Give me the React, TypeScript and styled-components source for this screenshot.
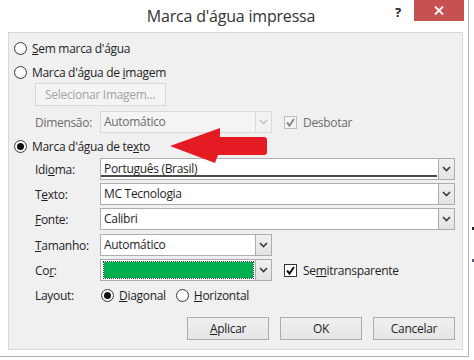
import React from 'react';
import styled, { createGlobalStyle } from 'styled-components';

const GlobalStyle = createGlobalStyle`
  body {
    margin: 0;
    background: #fff;
    font-family: 'Open Sans', 'Noto Sans', sans-serif;
    font-size: 12px;
    letter-spacing: -0.3px;
    color: #1e1e1e;
  }
`;

const Chevron: React.FC<{ color?: string }> = ({ color = '#3a3a3a' }) => (
  <svg width="9" height="6" viewBox="0 0 9 6">
    <polyline points="1,1 4.5,4.5 8,1" fill="none" stroke={color} strokeWidth="1.6" />
  </svg>
);

const Check: React.FC<{ color: string }> = ({ color }) => (
  <svg width="11" height="11" viewBox="0 0 11 11">
    <polyline points="2,5.5 4.5,8.5 9,2" fill="none" stroke={color} strokeWidth="2" />
  </svg>
);

const App: React.FC = () => {
  return (
    <Page>
      <GlobalStyle />
      <Window>
        <TitleBar>
          <Title>Marca d'água impressa</Title>
          <Help>?</Help>
          <Close>
            <svg width="10" height="9" viewBox="0 0 10 9">
              <path d="M1 0.5 L9 8.5 M9 0.5 L1 8.5" stroke="#fff" strokeWidth="1.8" />
            </svg>
          </Close>
        </TitleBar>
        <Panel>
          <RadioRow>
            <Radio />
            <span><U>S</U>em marca d'água</span>
          </RadioRow>
          <RadioRow $mt={4}>
            <Radio />
            <span>Marca d'água de <U>i</U>magem</span>
          </RadioRow>
          <DisabledButton $mt={1}>Selecionar Imagem...</DisabledButton>
          <FieldRow $mt={5}>
            <Label $disabled>Dimensão:</Label>
            <SelectBox $w={172} $disabled>
              <Value $disabled>Automático</Value>
              <ArrowBox $disabled><Chevron color="#c4c4c4" /></ArrowBox>
            </SelectBox>
            <CheckItem $disabled>
              <CheckBox $disabled><Check color="#8a8a8a" /></CheckBox>
              Desbotar
            </CheckItem>
          </FieldRow>
          <RadioRow $mt={3}>
            <Radio $on />
            <span>Marca d'água de te<U>x</U>to</span>
          </RadioRow>
          <FieldRow $mt={2}>
            <Label>Idi<U>o</U>ma:</Label>
            <SelectBox $w={355}>
              <Value $lined>Português (Brasil)</Value>
              <ArrowBox><Chevron /></ArrowBox>
            </SelectBox>
          </FieldRow>
          <FieldRow $mt={3}>
            <Label>T<U>e</U>xto:</Label>
            <SelectBox $w={355}>
              <Value>MC Tecnologia</Value>
              <ArrowBox><Chevron /></ArrowBox>
            </SelectBox>
          </FieldRow>
          <FieldRow $mt={3}>
            <Label><U>F</U>onte:</Label>
            <SelectBox $w={355}>
              <Value>Calibri</Value>
              <ArrowBox><Chevron /></ArrowBox>
            </SelectBox>
          </FieldRow>
          <FieldRow $mt={4}>
            <Label><U>T</U>amanho:</Label>
            <SelectBox $w={172}>
              <Value>Automático</Value>
              <ArrowBox><Chevron /></ArrowBox>
            </SelectBox>
          </FieldRow>
          <FieldRow $mt={3}>
            <Label>Co<U>r</U>:</Label>
            <SelectBox $w={172}>
              <Swatch />
              <ArrowBox><Chevron /></ArrowBox>
            </SelectBox>
            <CheckItem>
              <CheckBox><Check color="#111" /></CheckBox>
              <span>Se<U>m</U>itransparente</span>
            </CheckItem>
          </FieldRow>
          <FieldRow $mt={3}>
            <Label>Layout:</Label>
            <Options>
              <RadioItem>
                <Radio $on />
                <span><U>D</U>iagonal</span>
              </RadioItem>
              <RadioItem>
                <Radio />
                <span><U>H</U>orizontal</span>
              </RadioItem>
            </Options>
          </FieldRow>
          <ButtonRow>
            <Button><U>A</U>plicar</Button>
            <Button>OK</Button>
            <Button>Cancelar</Button>
          </ButtonRow>
        </Panel>
        <Arrow width="101" height="38" viewBox="0 0 101 38">
          <path
            d="M2 20 L52 2 L52 11 L96 11 Q99 11 99 14 L99 26 Q99 29 96 29 L50 29 L47 37 Z"
            fill="#e51b24"
          />
        </Arrow>
      </Window>
      <Backdrop>
        <Mark />
        <Mark $mt={29} $color="#555a7a" />
      </Backdrop>
    </Page>
  );
};

const Page = styled.div`
  display: flex;
  width: 474px;
  height: 360px;
  overflow: hidden;
`;

const Window = styled.div`
  position: relative;
  width: 468px;
  height: 356px;
  background: #fff;
  border-right: 1px solid #b3b3b3;
  border-bottom: 1px solid #b3b3b3;
  display: flex;
  flex-direction: column;
  flex-shrink: 0;
`;

const TitleBar = styled.div`
  height: 32px;
  display: flex;
  align-items: flex-start;
`;

const Title = styled.div`
  flex: 1;
  padding-left: 72px;
  text-align: center;
  font-size: 16px;
  letter-spacing: -0.2px;
  line-height: 32px;
  color: #333;
`;

const Help = styled.div`
  width: 16px;
  margin: 4px 8px 0 0;
  font-size: 13px;
  font-weight: bold;
  color: #222;
  line-height: 16px;
  text-align: center;
`;

const Close = styled.div`
  width: 50px;
  height: 21px;
  margin-right: 4px;
  background: #c75050;
  display: flex;
  align-items: center;
  justify-content: center;
`;

const Panel = styled.div`
  flex: 1;
  margin: 0 5px 6px 8px;
  padding: 5px 7px 0 5px;
  background: #f0f0f0;
  border: 1px solid #d8d8d8;
  display: flex;
  flex-direction: column;
`;

const RadioRow = styled.div<{ $mt?: number }>`
  height: 20px;
  margin-top: ${p => p.$mt ?? 0}px;
  display: flex;
  align-items: center;
  gap: 5px;
`;

const Radio = styled.span<{ $on?: boolean }>`
  width: 13px;
  height: 13px;
  box-sizing: border-box;
  border-radius: 50%;
  border: 1px solid #3c3c3c;
  background: radial-gradient(circle at 50% 40%, #fff 40%, #e6e6e6);
  display: inline-flex;
  align-items: center;
  justify-content: center;
  flex-shrink: 0;
  &::after {
    content: '';
    display: ${p => (p.$on ? 'block' : 'none')};
    width: 7px;
    height: 7px;
    border-radius: 50%;
    background: #111;
  }
`;

const U = styled.span`
  text-decoration: underline;
`;

const DisabledButton = styled.div<{ $mt?: number }>`
  margin: ${p => p.$mt ?? 0}px 0 0 21px;
  width: 131px;
  height: 23px;
  box-sizing: border-box;
  border: 1px solid #d9d9d9;
  background: #f4f4f4;
  color: #a3a3a3;
  padding-left: 9px;
  line-height: 21px;
`;

const FieldRow = styled.div<{ $mt?: number }>`
  height: 22px;
  margin: ${p => p.$mt ?? 0}px 0 0 21px;
  display: flex;
  align-items: center;
`;

const Label = styled.div<{ $disabled?: boolean }>`
  width: 65px;
  flex-shrink: 0;
  color: ${p => (p.$disabled ? '#6d6d6d' : '#1e1e1e')};
`;

const SelectBox = styled.div<{ $w: number; $disabled?: boolean }>`
  width: ${p => p.$w}px;
  height: 22px;
  box-sizing: border-box;
  border: 1px solid ${p => (p.$disabled ? '#d9d9d9' : '#abadb3')};
  background: ${p => (p.$disabled ? '#f4f4f4' : '#fff')};
  display: flex;
  align-items: stretch;
`;

const Value = styled.div<{ $disabled?: boolean; $lined?: boolean }>`
  flex: 1;
  padding-left: 3px;
  line-height: 19px;
  color: ${p => (p.$disabled ? '#6d6d6d' : '#1e1e1e')};
  box-shadow: ${p => (p.$lined ? 'inset 0 -2px 0 #fff, inset 0 -4px 0 #4a4a4a' : 'none')};
`;

const Swatch = styled.div`
  flex: 1;
  margin: 2px 1px 2px 3px;
  background: #00b050;
  outline: 1px dotted #333;
  outline-offset: 0;
`;

const ArrowBox = styled.div<{ $disabled?: boolean }>`
  width: 17px;
  margin: -1px -1px -1px 1px;
  box-sizing: border-box;
  border: 1px solid ${p => (p.$disabled ? '#dadada' : '#acacac')};
  background: ${p => (p.$disabled ? '#f2f2f2' : 'linear-gradient(#f0f0f0, #e3e3e3)')};
  display: flex;
  align-items: center;
  justify-content: center;
`;

const CheckItem = styled.div<{ $disabled?: boolean }>`
  margin-left: 12px;
  display: flex;
  align-items: center;
  gap: 6px;
  color: ${p => (p.$disabled ? '#6d6d6d' : '#1e1e1e')};
`;

const CheckBox = styled.span<{ $disabled?: boolean }>`
  width: 13px;
  height: 13px;
  box-sizing: border-box;
  border: 1px solid ${p => (p.$disabled ? '#bcbcbc' : '#333')};
  background: ${p => (p.$disabled ? '#f4f4f4' : '#fff')};
  display: inline-flex;
  align-items: center;
  justify-content: center;
`;

const Options = styled.div`
  display: flex;
  align-items: center;
  gap: 10px;
  margin-left: 1px;
`;

const RadioItem = styled.div`
  display: flex;
  align-items: center;
  gap: 5px;
`;

const ButtonRow = styled.div`
  margin-top: 11px;
  display: flex;
  justify-content: flex-end;
  gap: 11px;
`;

const Button = styled.div`
  width: 82px;
  height: 23px;
  box-sizing: border-box;
  border: 1px solid #acacac;
  background: linear-gradient(#f0f0f0, #e5e5e5);
  text-align: center;
  line-height: 21px;
`;

const Arrow = styled.svg`
  position: absolute;
  left: 168px;
  top: 126px;
`;

const Backdrop = styled.div`
  flex: 1;
  padding: 227px 0 0 3px;
  display: flex;
  flex-direction: column;
`;

const Mark = styled.div<{ $mt?: number; $color?: string }>`
  width: 3px;
  height: 3px;
  margin-top: ${p => p.$mt ?? 0}px;
  background: ${p => p.$color ?? '#222'};
`;

export default App;
